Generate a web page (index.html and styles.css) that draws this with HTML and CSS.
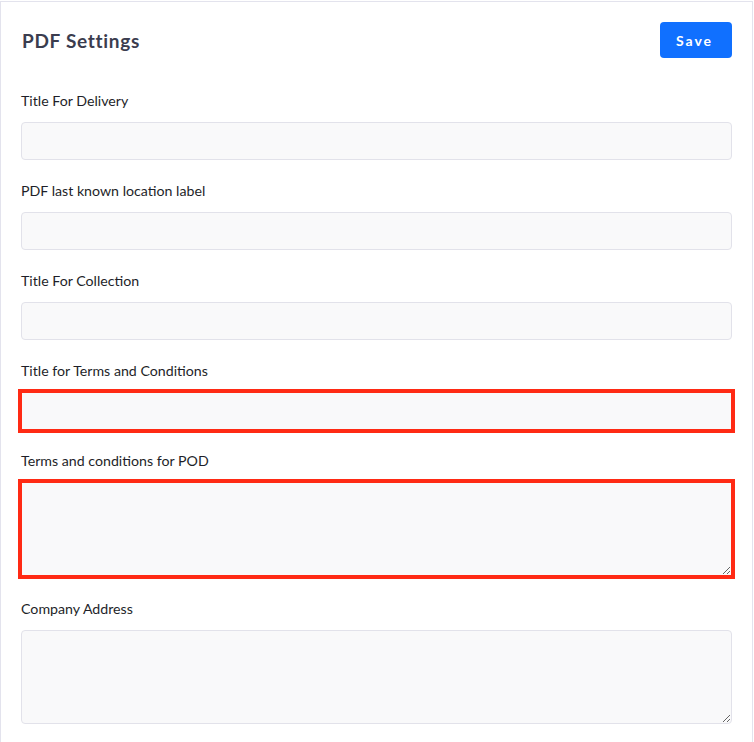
FILE: index.html
```html
<!DOCTYPE html>
<html>
<head>
    <title>PDF Settings</title>
    <link rel="stylesheet" href="styles.css">
</head>
<body>
    <div class="settings-card">
        <div class="card-header">
            <h2>PDF Settings</h2>
            <button class="save-btn">Save</button>
        </div>

        <div class="form-group">
            <label>Title For Delivery</label>
            <input type="text" class="form-input">
        </div>

        <div class="form-group">
            <label>PDF last known location label</label>
            <input type="text" class="form-input">
        </div>

        <div class="form-group">
            <label>Title For Collection</label>
            <input type="text" class="form-input">
        </div>

        <div class="form-group">
            <label>Title for Terms and Conditions</label>
            <input type="text" class="form-input highlight">
        </div>

        <div class="form-group">
            <label>Terms and conditions for POD</label>
            <textarea class="form-input form-textarea highlight"></textarea>
        </div>

        <div class="form-group">
            <label>Company Address</label>
            <textarea class="form-input form-textarea"></textarea>
        </div>
    </div>
</body>
</html>
```

FILE: styles.css
```css
body {
    margin: 0;
    padding-top: 1px;
    font-family: Lato, "Open Sans", sans-serif;
    background: #fff;
}
.settings-card {
    width: 711px;
    margin-right: 1px;
    padding: 20px 20px 20px 20px;
    border: 1px solid #e3e3ed;
    border-bottom: none;
    background: #fff;
}
.card-header {
    display: flex;
    justify-content: space-between;
    align-items: center;
    height: 36px;
    margin-bottom: 33px;
}
.card-header h2 {
    margin: 0 0 0 1px;
    font-size: 19px;
    font-weight: 700;
    letter-spacing: 0.7px;
    color: #3b3d4f;
}
.save-btn {
    width: 72px;
    height: 36px;
    margin-right: 0;
    border: none;
    border-radius: 4px;
    background: #1070ff;
    color: #fff;
    font-family: inherit;
    font-size: 14px;
    font-weight: 700;
    letter-spacing: 2px;
    padding-left: 3px;
}
.form-group {
    margin-bottom: 21px;
}
.form-group label {
    display: block;
    font-size: 14.2px;
    line-height: 20px;
    color: #1e1f29;
    margin-bottom: 11px;
}
.form-input {
    display: block;
    box-sizing: border-box;
    width: 711px;
    height: 38px;
    margin: 0;
    padding: 8px 12px;
    background: #f9f9fa;
    border: 1px solid #e2e2ea;
    border-radius: 4px;
    font-family: inherit;
    font-size: 14px;
}
.form-textarea {
    height: 94px;
}
.form-group:has(.form-textarea) {
    margin-bottom: 23px;
}
.highlight {
    outline: 4px solid #ff2a14;
    outline-offset: -1px;
    border-radius: 0;
}
```
